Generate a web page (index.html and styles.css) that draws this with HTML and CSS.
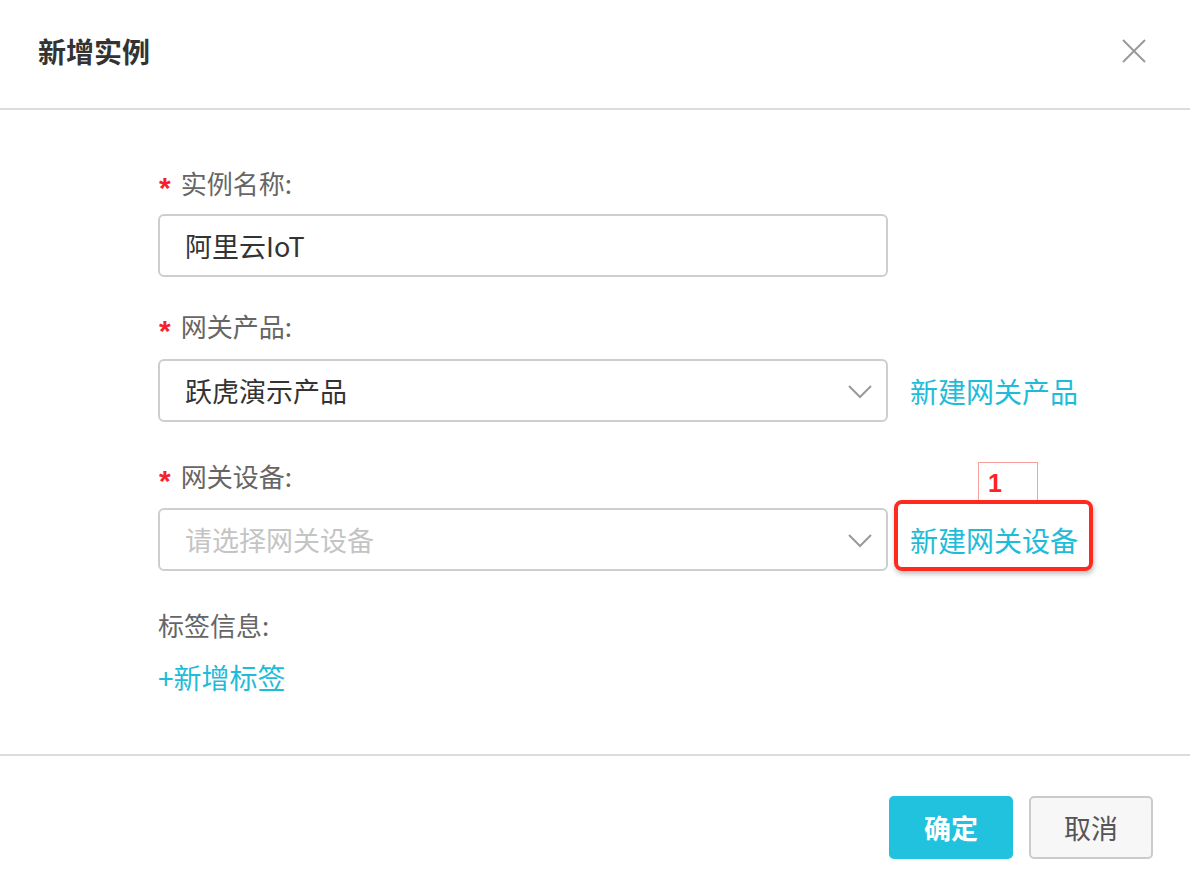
FILE: index.html
```html
<!DOCTYPE html>
<html lang="zh-CN">
<head>
<meta charset="utf-8">
<title>新增实例</title>
<link rel="stylesheet" href="styles.css">
</head>
<body>
<div class="dialog">
  <div class="dialog-header">
    <h1 class="dialog-title">新增实例</h1>
    <button class="close-btn" aria-label="关闭">
      <svg width="24" height="24" viewBox="0 0 24 24"><path d="M1 1 L23 23 M23 1 L1 23" stroke="#9a9a9a" stroke-width="2" fill="none"/></svg>
    </button>
  </div>
  <div class="dialog-body">
    <div class="form-item item-name">
      <div class="form-label"><span class="req">*</span>实例名称:</div>
      <div class="form-row">
        <div class="input">阿里云IoT</div>
      </div>
    </div>
    <div class="form-item item-product">
      <div class="form-label"><span class="req">*</span>网关产品:</div>
      <div class="form-row">
        <div class="input select">
          <span>跃虎演示产品</span>
          <svg class="chev" width="24" height="14" viewBox="0 0 24 14"><path d="M1 1 L12 12 L23 1" stroke="#9a9a9a" stroke-width="2" fill="none"/></svg>
        </div>
        <a class="link side-link">新建网关产品</a>
      </div>
    </div>
    <div class="form-item item-device">
      <div class="form-label"><span class="req">*</span>网关设备:</div>
      <div class="form-row">
        <div class="input select placeholder">
          <span>请选择网关设备</span>
          <svg class="chev" width="24" height="14" viewBox="0 0 24 14"><path d="M1 1 L12 12 L23 1" stroke="#9a9a9a" stroke-width="2" fill="none"/></svg>
        </div>
        <div class="mark-wrap">
          <a class="link side-link">新建网关设备</a>
          <span class="mark-box"></span>
          <span class="mark-num">1</span>
        </div>
      </div>
    </div>
    <div class="form-item item-tags">
      <div class="form-label plain">标签信息:</div>
      <a class="link add-tag">+新增标签</a>
    </div>
  </div>
  <div class="dialog-footer">
    <button class="btn btn-primary">确定</button>
    <button class="btn btn-default">取消</button>
  </div>
</div>
</body>
</html>
```

FILE: styles.css
```css
* { box-sizing: border-box; }
html, body { margin: 0; padding: 0; background: #fff; }
body {
  font-family: "Noto Sans CJK SC", "Noto Sans", sans-serif;
  color: #333;
  width: 1190px;
  height: 892px;
  overflow: hidden;
}
.dialog { width: 1190px; height: 892px; display: flex; flex-direction: column; }
.dialog-header {
  height: 110px;
  border-bottom: 2px solid #dcdcdc;
  display: flex;
  align-items: center;
  justify-content: space-between;
  padding: 0 44px 6px 38px;
}
.dialog-title {
  margin: 0;
  font-size: 28px;
  font-weight: bold;
  color: #333;
  line-height: 36px;
}
.close-btn {
  border: none;
  background: none;
  padding: 0;
  width: 24px;
  height: 24px;
  display: flex;
}
.dialog-body {
  padding: 55px 0 0 158px;
  height: 646px;
  border-bottom: 2px solid #dcdcdc;
}
.form-item { display: flex; flex-direction: column; }
.item-name { margin-bottom: 31px; }
.item-product { margin-bottom: 36px; }
.item-device { margin-bottom: 36px; }
.form-label {
  font-size: 26px;
  line-height: 36px;
  height: 36px;
  color: #666;
  margin-bottom: 13px;
  display: flex;
  align-items: center;
}
.item-device .form-label { margin-bottom: 14px; }
.item-product .form-label { margin-bottom: 15px; }
.form-label .req {
  color: #f5222d;
  font-family: "Liberation Sans", sans-serif;
  font-weight: bold;
  font-size: 30px;
  margin-left: 1px;
  margin-right: 10px;
  position: relative;
  top: 5px;
}
.form-row { display: flex; align-items: center; }
.input {
  width: 730px;
  height: 63px;
  border: 2px solid #cdced0;
  border-radius: 6px;
  font-size: 27px;
  line-height: 36px;
  color: #333;
  padding: 0 14px 0 25px;
  display: flex;
  align-items: center;
  justify-content: space-between;
}
.placeholder { color: #c4c4c4; }
.chev { margin-top: 2px; }
.link { color: #1fbcd9; text-decoration: none; font-size: 28px; line-height: 36px; }
.side-link { margin-left: 22px; }
.mark-wrap { position: relative; display: flex; }
.mark-box {
  position: absolute;
  left: 6px;
  top: -22px;
  width: 199px;
  height: 71px;
  border: 4px solid #ff2a1e;
  border-radius: 8px;
  box-shadow: 1px 3px 5px rgba(0,0,0,0.25);
}
.mark-num {
  position: absolute;
  left: 90px;
  top: -60px;
  width: 60px;
  height: 38px;
  border: 1px solid #f8a0a0;
  border-bottom: none;
  color: #f22;
  font-family: "Liberation Sans", sans-serif;
  font-weight: bold;
  font-size: 25px;
  line-height: 40px;
  padding-left: 9px;
}
.item-tags .form-label { margin-bottom: 16px; }
.add-tag { font-size: 28px; }
.dialog-footer {
  flex: 1;
  display: flex;
  justify-content: flex-end;
  align-items: flex-start;
  padding: 40px 37px 0 0;
  gap: 16px;
}
.btn {
  width: 124px;
  height: 63px;
  border-radius: 5px;
  font-family: "Noto Sans CJK SC", sans-serif;
  font-size: 27px;
  line-height: 36px;
  padding: 0;
  cursor: pointer;
}
.btn-primary {
  background: #21c2de;
  border: none;
  color: #fff;
  font-weight: bold;
}
.btn-default {
  background: #f7f7f8;
  border: 2px solid #c9cbce;
  color: #555;
}
```
